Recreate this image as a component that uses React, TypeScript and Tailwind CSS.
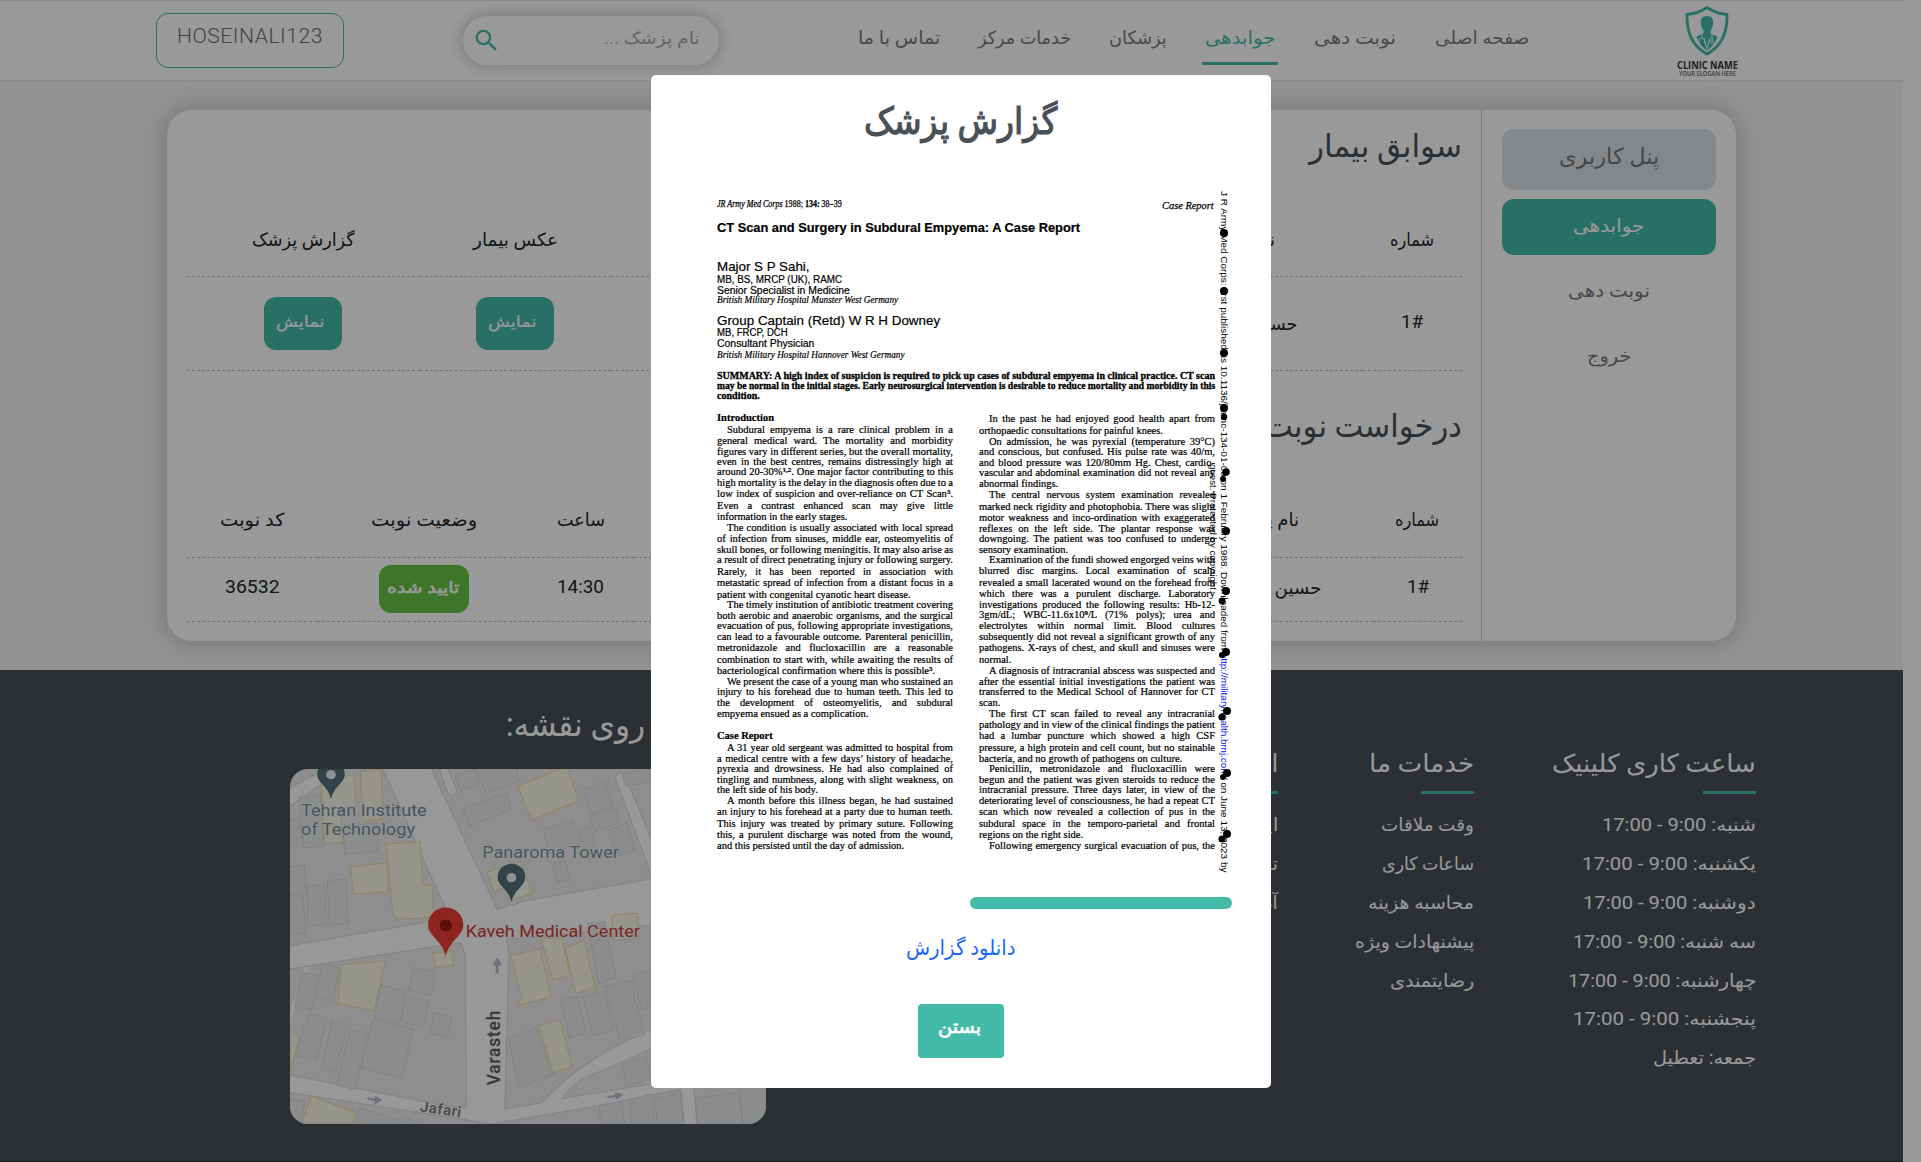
import { useLayoutEffect, useRef, useState } from "react";
import type { ReactNode } from "react";
import { MdSearch } from "react-icons/md";

/* Text scaled horizontally so that it takes exactly `w` pixels. */
function Fit({ w, ltr = false, className = "", children }: { w: number; ltr?: boolean; className?: string; children: ReactNode }) {
  const ref = useRef<HTMLSpanElement>(null);
  const [scale, setScale] = useState(1);
  useLayoutEffect(() => {
    if (ref.current && ref.current.offsetWidth) setScale(w / ref.current.offsetWidth);
  }, [w]);
  return (
    <span dir={ltr ? "ltr" : "rtl"} className={`inline-block shrink-0 leading-none whitespace-nowrap ${className}`} style={{ width: w }}>
      <span ref={ref} className={`inline-block ${ltr ? "origin-left" : "origin-right"}`} style={{ transform: `scaleX(${scale})` }}>
        {children}
      </span>
    </span>
  );
}

/* A justified line: word spacing is adjusted until the line is `w` pixels wide. */
function Justified({ w, children }: { w: number; children: ReactNode }) {
  const ref = useRef<HTMLSpanElement>(null);
  const [gap, setGap] = useState(0);
  useLayoutEffect(() => {
    const el = ref.current;
    if (!el) return;
    const spaces = (el.textContent || "").split(" ").length - 1;
    const natural = el.getBoundingClientRect().width;
    if (spaces > 0) setGap((prev) => prev + (w - natural) / spaces);
  }, [w]);
  return (
    <span ref={ref} className="inline-block whitespace-nowrap" style={{ wordSpacing: `${gap}px` }}>
      {children}
    </span>
  );
}

/* [y, kind, text]; kind: j = justified, i = indented + justified, e = paragraph end, b = bold heading */
type Row = [number, string, ReactNode];

const sup = (t: string) => <sup className="relative -top-[3px] align-baseline text-[7px] leading-none font-bold">{t}</sup>;

const LEFT: Row[] = [
  [419, "b", "Introduction"],
  [431, "i", "Subdural empyema is a rare clinical problem in a"],
  [442, "j", "general medical ward. The mortality and morbidity"],
  [453, "j", "figures vary in different series, but the overall mortality,"],
  [463, "j", "even in the best centres, remains distressingly high at"],
  [473, "j", <>around 20-30%{sup("1,2")}. One major factor contributing to this</>],
  [484, "j", "high mortality is the delay in the diagnosis often due to a"],
  [495, "j", <>low index of suspicion and over-reliance on CT Scan{sup("3")}.</>],
  [507, "j", "Even a contrast enhanced scan may give little"],
  [518, "e", "information in the early stages."],
  [529, "i", "The condition is usually associated with local spread"],
  [540, "j", "of infection from sinuses, middle ear, osteomyelitis of"],
  [551, "j", "skull bones, or following meningitis. It may also arise as"],
  [561, "j", "a result of direct penetrating injury or following surgery."],
  [573, "j", "Rarely, it has been reported in association with"],
  [584, "j", "metastatic spread of infection from a distant focus in a"],
  [596, "e", "patient with congenital cyanotic heart disease."],
  [606, "i", "The timely institution of antibiotic treatment covering"],
  [617, "j", "both aerobic and anaerobic organisms, and the surgical"],
  [627, "j", "evacuation of pus, following appropriate investigations,"],
  [638, "j", "can lead to a favourable outcome. Parenteral penicillin,"],
  [649, "j", "metronidazole and flucloxacillin are a reasonable"],
  [661, "j", "combination to start with, while awaiting the results of"],
  [672, "e", <>bacteriological confirmation where this is possible{sup("3")}.</>],
  [683, "i", "We present the case of a young man who sustained an"],
  [693, "j", "injury to his forehead due to human teeth. This led to"],
  [704, "j", "the development of osteomyelitis, and subdural"],
  [715, "e", "empyema ensued as a complication."],
  [737, "b", "Case Report"],
  [749, "i", "A 31 year old sergeant was admitted to hospital from"],
  [760, "j", "a medical centre with a few days’ history of headache,"],
  [770, "j", "pyrexia and drowsiness. He had also complained of"],
  [781, "j", "tingling and numbness, along with slight weakness, on"],
  [791, "e", "the left side of his body."],
  [802, "i", "A month before this illness began, he had sustained"],
  [813, "j", "an injury to his forehead at a party due to human teeth."],
  [825, "j", "This injury was treated by primary suture. Following"],
  [836, "j", "this, a purulent discharge was noted from the wound,"],
  [847, "e", "and this persisted until the day of admission."],
];

const RIGHT: Row[] = [
  [420, "i", "In the past he had enjoyed good health apart from"],
  [432, "e", "orthopaedic consultations for painful knees."],
  [443, "i", "On admission, he was pyrexial (temperature 39°C)"],
  [453, "j", "and conscious, but confused. His pulse rate was 40/m,"],
  [464, "j", "and blood pressure was 120/80mm Hg. Chest, cardio-"],
  [474, "j", "vascular and abdominal examination did not reveal any"],
  [485, "e", "abnormal findings."],
  [496, "i", "The central nervous system examination revealed"],
  [508, "j", "marked neck rigidity and photophobia. There was slight"],
  [519, "j", "motor weakness and inco-ordination with exaggerated"],
  [530, "j", "reflexes on the left side. The plantar response was"],
  [540, "j", "downgoing. The patient was too confused to undergo"],
  [551, "e", "sensory examination."],
  [561, "i", "Examination of the fundi showed engorged veins with"],
  [572, "j", "blurred disc margins. Local examination of scalp"],
  [584, "j", "revealed a small lacerated wound on the forehead from"],
  [595, "j", "which there was a purulent discharge. Laboratory"],
  [606, "j", "investigations produced the following results: Hb-12-"],
  [616, "j", <>3gm/dL; WBC-11.6x10{sup("9")}/L (71% polys); urea and</>],
  [627, "j", "electrolytes within normal limit. Blood cultures"],
  [638, "j", "subsequently did not reveal a significant growth of any"],
  [649, "j", "pathogens. X-rays of chest, and skull and sinuses were"],
  [661, "e", "normal."],
  [672, "i", "A diagnosis of intracranial abscess was suspected and"],
  [683, "j", "after the essential initial investigations the patient was"],
  [693, "j", "transferred to the Medical School of Hannover for CT"],
  [704, "e", "scan."],
  [715, "i", "The first CT scan failed to reveal any intracranial"],
  [726, "j", "pathology and in view of the clinical findings the patient"],
  [737, "j", "had a lumbar puncture which showed a high CSF"],
  [749, "j", "pressure, a high protein and cell count, but no stainable"],
  [760, "e", "bacteria, and no growth of pathogens on culture."],
  [770, "i", "Penicillin, metronidazole and flucloxacillin were"],
  [781, "j", "begun and the patient was given steroids to reduce the"],
  [791, "j", "intracranial pressure. Three days later, in view of the"],
  [802, "j", "deteriorating level of consciousness, he had a repeat CT"],
  [813, "j", "scan which now revealed a collection of pus in the"],
  [825, "j", "subdural space in the temporo-parietal and frontal"],
  [836, "e", "regions on the right side."],
  [847, "i", "Following emergency surgical evacuation of pus, the"],
];

function Column({ rows, start }: { rows: Row[]; start: number }) {
  return (
    <div className="w-[236px] text-[10.5px] leading-[10px]" style={{ paddingTop: rows[0][0] - start }}>
      {rows.map(([y, kind, text], n) => {
        const height = n + 1 < rows.length ? rows[n + 1][0] - y : 11;
        return (
          <div key={y} className={kind === "i" ? "pl-[10px]" : kind === "b" ? "font-bold" : ""} style={{ height }}>
            {kind === "j" || kind === "i" ? <Justified w={kind === "i" ? 226 : 236}>{text}</Justified> : text}
          </div>
        );
      })}
    </div>
  );
}

const BLOTS = [
  [1224, 233, 4], [1224, 291, 4], [1224, 353, 4], [1224, 408, 4], [1224, 417, 3.2], [1226, 472, 3.8], [1223, 479, 3],
  [1226, 531, 4], [1226, 591, 4], [1222, 601, 3.4], [1226, 652, 4], [1222, 655, 3], [1227, 711, 4], [1222, 717, 3.6],
  [1227, 773, 4], [1223, 777, 3], [1227, 834, 4], [1222, 839, 3.6],
];

function Scan() {
  return (
    <div dir="ltr" className="relative h-[714px] pl-[66px] font-['Liberation_Serif'] text-black">
      <div className="flex h-[14px] w-[497px] justify-between pt-px text-[9.5px] italic [-webkit-text-stroke:0.25px]">
        <Fit ltr w={125}>JR Army Med Corps <span className="not-italic">1988; <b>134:</b> 38–39</span></Fit>
        <Fit ltr w={52} className="text-[11px]">Case Report</Fit>
      </div>
      <div className="flex flex-col items-start pt-px font-['Liberation_Sans'] text-[10px] [-webkit-text-stroke:0.2px]">
        <Fit ltr w={363} className="mt-[8px] h-[38px] text-[12.5px] font-bold">CT Scan and Surgery in Subdural Empyema: A Case Report</Fit>
        <Fit ltr w={93} className="h-[15px] text-[13.5px]">Major S P Sahi,</Fit>
        <Fit ltr w={125} className="h-[11px]">MB, BS, MRCP (UK), RAMC</Fit>
        <Fit ltr w={133} className="h-[10px]">Senior Specialist in Medicine</Fit>
        <Fit ltr w={181} className="h-[18px] font-['Liberation_Serif'] text-[9.5px] italic">British Military Hospital Munster West Germany</Fit>
        <Fit ltr w={223} className="h-[14px] text-[13.5px]">Group Captain (Retd) W R H Downey</Fit>
        <Fit ltr w={71} className="h-[11px]">MB, FRCP, DCH</Fit>
        <Fit ltr w={97} className="h-[12px]">Consultant Physician</Fit>
        <Fit ltr w={188} className="h-[20px] font-['Liberation_Serif'] text-[9.5px] italic">British Military Hospital Hannover West Germany</Fit>
      </div>
      <div className="flex h-[42px] flex-col items-start text-[9.6px] leading-[10px] font-bold [-webkit-text-stroke:0.3px]">
        <Fit ltr w={498} className="h-[10px]">SUMMARY: A high index of suspicion is required to pick up cases of subdural empyema in clinical practice. CT scan</Fit>
        <Fit ltr w={498} className="h-[10px]">may be normal in the initial stages. Early neurosurgical intervention is desirable to reduce mortality and morbidity in this</Fit>
        <Fit ltr w={43} className="h-[10px]">condition.</Fit>
      </div>
      <div className="flex gap-[26px] [-webkit-text-stroke:0.22px]">
        <Column rows={LEFT} start={419} />
        <Column rows={RIGHT} start={419} />
      </div>
      {/* download stamp printed over the right margin */}
      <div className="absolute top-[-8px] left-[578px] origin-top-left rotate-90 font-['Liberation_Sans'] text-[9.5px] leading-none">
        <Fit ltr w={681}>
          J R Army Med Corps: first published as 10.1136/jramc-134-01-09 on 1 February 1988. Downloaded from{" "}
          <span className="text-[#1010ee]">http://militaryhealth.bmj.com/</span> on June 13, 2023 by
        </Fit>
      </div>
      <div className="absolute top-[265px] left-[567px] origin-top-left rotate-90 font-['Liberation_Sans'] text-[9.5px] leading-none">
        <Fit ltr w={129}>guest. Protected by copyright.</Fit>
      </div>
      <svg className="absolute top-[-8px] left-[560px] h-[700px] w-[24px]" viewBox="1211 191 24 700">
        {BLOTS.map(([x, y, r]) => (
          <circle key={`${x}-${y}`} cx={x} cy={y} r={r} />
        ))}
      </svg>
    </div>
  );
}

function Pin({ x, y, s, fill, dot }: { x: number; y: number; s: number; fill: string; dot: string }) {
  return (
    <g transform={`translate(${x} ${y}) scale(${s})`}>
      <path d="M0 0C-3 -18 -12 -30 -26 -46C-36 -58 -40 -64 -40 -76A40 40 0 0 1 40 -76C40 -64 36 -58 26 -46C12 -30 3 -18 0 0Z" fill={fill} />
      <circle cx="0" cy="-74" r="14" fill={dot} />
    </g>
  );
}

const BUILDINGS = [
  "116,418 142,416 154,498 116,500", "142,350 205,345 216,498 156,503", "270,440 370,428 372,514 275,522",
  "116,560 158,556 164,642 116,647", "166,620 216,614 222,733 168,738", "224,602 278,596 285,732 231,735", "116,655 154,650 161,760 116,765",
  "150,878 198,888 178,992 130,980", "210,852 262,864 240,965 190,954", "475,862 538,876 524,947 460,930",
  "380,914 450,935 434,1030 362,1012", "455,952 520,964 503,1040 437,1026", "536,998 586,1010 573,1073 522,1060",
  "356,1018 473,1046 442,1194 323,1164", "172,1003 222,1015 193,1140 135,1126 160,1030", "238,1022 282,1032 248,1178 207,1168", "290,1048 340,1060 306,1228 250,1215",
  "618,388 746,338 758,388 638,438", "594,285 655,267 665,312 610,330", "852,450 936,418 962,488 868,524", "968,330 1030,303 1055,375 990,402", "985,408 1058,384 1075,425 1000,455",
  "955,450 985,440 1010,525 985,540", "1040,450 1095,430 1118,510 1062,530", "876,550 914,540 930,600 892,608", "655,267 776,267 780,305 686,340",
  "980,730 1030,724 1062,890 1012,912", "903,962 950,948 976,1060 926,1074", "966,950 1028,934 1054,1050 996,1066", "1030,918 1104,900 1144,1065 1074,1082", "1110,885 1164,872 1164,980 1136,988",
  "750,1075 832,1044 878,1186 780,1222", "1082,1150 1150,1130 1164,1195 1090,1218", "116,1256 160,1265 145,1332 116,1332", "318,1284 436,1322 434,1332 305,1332", "446,1314 500,1328 500,1332 446,1332",
  "1080,280 1164,267 1164,306 1090,318",
];

/* blocks south of the lower road */
const SOUTH = [
  "1014,1275 1078,1265 1088,1332 1018,1332", "1104,1258 1168,1242 1174,1332 1106,1332", "1176,1254 1250,1240 1258,1332 1182,1332",
  "1292,1254 1420,1238 1430,1332 1300,1332", "1420,1225 1498,1215 1498,1332 1432,1332",
];

const SHOPS = [
  "205,292 302,286 306,380 262,385 270,486 216,490", "320,272 382,268 384,418 326,422", "396,492 494,486 502,616 528,616 534,712 424,718 414,700", "292,560 396,548 402,635 300,642",
  "776,318 920,260 954,362 818,420", "688,576 785,544 819,640 760,662 745,620 708,636", "530,820 585,812 590,856 540,862",
  "266,854 392,843 360,992 255,970", "757,826 842,806 874,952 780,976 776,962 790,958", "845,775 905,775 930,886 880,900", "915,805 970,780 1002,924 946,940", "838,1036 900,1020 935,1162 880,1178", "116,1060 144,1066 116,1180", "178,1248 306,1298 295,1332 150,1332",
];

function Map() {
  return (
    <svg direction="ltr" className="block h-[355px] w-[476px] rounded-[18px]" viewBox="116 267 1382 1065" preserveAspectRatio="none">
      <rect x="116" y="267" width="1382" height="1065" fill="#ededed" />
      <g fill="#fdfdfd" stroke="#d6d7da" strokeWidth="3">
        <path d="M110 328L214 267H270L110 384Z" />
        <path d="M545 250L570 330Q580 352 598 342Q604 336 592 310L570 250Z" />
        <path d="M1062 300Q1060 280 1076 280Q1086 280 1094 300L1190 540L1175 610Z" />
        <path d="M384 262L565 680C570 710 540 722 500 728L100 800V870L170 858L612 788L625 828L628 1284L560 1276L100 1182V1236L620 1318L700 1332L1010 1278L1250 1228L1262 1340H1298L1288 1222L1510 1180V1120L1150 1214L905 1256Q940 1210 980 1190L1164 1108L1400 1000L1400 940L1164 1048C1060 1096 940 1160 846 1268L740 1286L752 826L746 778L1520 700V530L1164 597L800 662L718 688L524 262Z" />
      </g>
      <path d="M110 1030L165 862" stroke="#fdfdfd" strokeWidth="10" />
      <g stroke="#d3d4d8" strokeWidth="2.5" fill="#e8ecec">
        {BUILDINGS.map((p) => <polygon key={p} points={p} />)}
        {SOUTH.map((p) => <polygon key={p} points={p} />)}
      </g>
      <g stroke="#f1dba4" strokeWidth="3" fill="#fbf8ea">
        {SHOPS.map((p) => <polygon key={p} points={p} />)}
        <polygon points="1050,706 1124,700 1128,776 1056,780" />
      </g>
      <g fill="#b9bbcf">
        <path d="M718 832L732 856H722V881H713V856H704Z" />
        <path d="M384 1260L362 1274V1264L340 1258V1252L362 1256V1247Z" />
        <path d="M1084 1244L1062 1260V1252L1038 1255V1248L1060 1244V1236Z" />
      </g>
      <Pin x={235} y={358} s={1} fill="#54707c" dot="#eef1f2" />
      <Pin x={759} y={667} s={1} fill="#54707c" dot="#eef1f2" />
      <Pin x={568} y={831} s={1.28} fill="#ea3f35" dot="#a01410" />
      <g fontFamily="Roboto" stroke="#f4f4f4" strokeWidth="5" paintOrder="stroke" textAnchor="start">
        <g fill="#7a8f99" fontSize="50">
          <text x="148" y="407" textLength="365" lengthAdjust="spacingAndGlyphs">Tehran Institute</text>
          <text x="148" y="465" textLength="331" lengthAdjust="spacingAndGlyphs">of Technology</text>
          <text x="674" y="535" textLength="397" lengthAdjust="spacingAndGlyphs">Panaroma Tower</text>
        </g>
        <text x="626" y="771" fontSize="51" fill="#cf3d3d" textLength="506" lengthAdjust="spacingAndGlyphs">Kaveh Medical Center</text>
        <text transform="translate(727 1216) rotate(-90)" fontSize="52" fill="#5a5b5e" fontWeight="500" textLength="224">Varasteh</text>
        <text transform="translate(492 1294) rotate(8)" fontSize="44" fill="#7b7b7d" fontWeight="500" textLength="120">Jafari</text>
      </g>
    </svg>
  );
}

function Logo() {
  return (
    <div dir="ltr" className="flex w-[62px] flex-col items-center pt-[4px]">
      <svg className="h-[52px] w-[46px]" viewBox="0 0 46 52">
        <path d="M23 2.5C17 6.5 10 9 3 9.500C2.500 26 8 41 23 49C38 41 43.500 26 43 9.500C36 9 29 6.500 23 2.500Z" fill="none" stroke="#44bba8" strokeWidth="2.8" />
        <path d="M23 11C18 11 16.500 14 16.800 18C17 21.500 18.500 24 19.500 25.500V28.500L12.500 31.500C14 37 18 42.500 23 45.500C28 42.500 32 37 33.500 31.500L26.500 28.500V25.500C27.500 24 29 21.500 29.200 18C29.500 14 28 11 23 11Z" fill="#44bba8" />
        <path d="M18 29.500V33M15 38V35.500Q15 33 17.800 33Q20.500 33 20.500 35.500V38M28 29V35M23 44L20 33M23 44L26 33" fill="none" stroke="#fff" strokeWidth="0.9" />
        <circle cx="28" cy="36.500" r="1.500" fill="none" stroke="#fff" strokeWidth="0.9" />
      </svg>
      <Fit ltr w={61} className="mt-[3px] font-['Open_Sans'] text-[10px] font-bold text-[#333]">CLINIC NAME</Fit>
      <Fit ltr w={57} className="mt-px font-['Open_Sans'] text-[6.5px] font-semibold text-[#666]">YOUR SLOGAN HERE</Fit>
    </div>
  );
}

const NAV: { label: string; w: number; box: string; on?: boolean }[] = [
  { label: "صفحه اصلی", w: 94, box: "w-[94px]" },
  { label: "نوبت دهی", w: 82, box: "ml-[36px] mr-[39px] w-[82px]" },
  { label: "جوابدهی", w: 70, box: "w-[76px]", on: true },
  { label: "پزشکان", w: 58, box: "mr-[35px] w-[58px]" },
  { label: "خدمات مرکز", w: 93, box: "mr-[38px] w-[93px]" },
  { label: "تماس با ما", w: 82, box: "mr-[38px] w-[82px]" },
];

function Header() {
  return (
    <header className="flex h-[81px] border-t border-b border-[#e7e7e7] bg-white pr-[165px]">
      <Logo />
      <nav className="mr-[147px] flex pt-[1px]">
        {NAV.map((n) => (
          <div key={n.label} className={`flex h-[63px] flex-col items-center pt-[27px] text-[18px] ${n.box} ${n.on ? "border-b-[3px] border-[#44bba8] text-[#44bba8]" : "text-[#7a7a7a]"}`}>
            <Fit w={n.w}>{n.label}</Fit>
          </div>
        ))}
      </nav>
      <div className="mt-[15px] mr-[139px] flex h-[49px] w-[256px] items-start justify-between rounded-full bg-white pr-[19px] pl-[9px] shadow-[0_0_14px_2px_rgba(0,0,0,0.2)]">
        <Fit w={96} className="pt-[14px] text-[17px] text-[#a3a8ad]">نام پزشک ...</Fit>
        <MdSearch className="mt-[10px] h-[29px] w-[29px] text-[#44bba8]" />
      </div>
      <div className="mt-[12px] mr-[119px] flex h-[55px] w-[188px] items-start rounded-[12px] border border-[#44bba8] pt-[12px] pr-[20px] text-[21px] text-[#6e6e6e]">
        <Fit ltr w={146} className="font-light tracking-[0.5px]">HOSEINALI123</Fit>
      </div>
    </header>
  );
}

const cell = "flex items-center justify-center border-b border-dashed border-[#bdbdbd]";

function ShowButton() {
  return (
    <button className="mr-px flex h-[53px] w-[78px] justify-center rounded-[12px] bg-[#44bba8] pt-[17px] text-[16px] text-white [-webkit-text-stroke:0.2px]">
      <Fit w={48}>نمایش</Fit>
    </button>
  );
}

function Card() {
  return (
    <section className="mx-auto flex h-[531px] w-[1569px] rounded-[25px] bg-white shadow-[0_0_22px_4px_rgba(0,0,0,0.16)]">
      <aside className="flex w-[255px] flex-col items-center border-l border-[#c8c8c8] pt-[19px] text-[18px] text-[#777]">
        <div className="flex h-[61px] w-[214px] justify-center rounded-[12px] bg-[#dde3e7] pt-[17px] text-[22px]"><Fit w={100}>پنل کاربری</Fit></div>
        <div className="mt-[9px] flex h-[56px] w-[214px] justify-center rounded-[12px] bg-[#44bba8] pt-[18px] text-white"><Fit w={71}>جوابدهی</Fit></div>
        <div className="pt-[22px]"><Fit w={82}>نوبت دهی</Fit></div>
        <div className="pt-[38px]"><Fit w={44}>خروج</Fit></div>
      </aside>
      <div className="mr-[19px] w-[1275px] text-[18px] text-[#212529]">
        <h2 className="h-[94px] pt-[12px] text-[32px] text-[#495057]"><Fit w={153}>سوابق بیمار</Fit></h2>
        <div className="grid grid-cols-[99px_752px_191px_233px]">
          <div className={`${cell} h-[73px]`}><Fit w={44}>شماره</Fit></div>
          <div className={`${cell} justify-start pr-[88px]`}><Fit w={72}>نام پزشک</Fit></div>
          <div className={cell}><Fit w={85}>عکس بیمار</Fit></div>
          <div className={cell}><Fit w={103}>گزارش پزشک</Fit></div>
          <div className={`${cell} h-[94px] pr-[2px] pb-[4px]`}><Fit w={22} ltr>1#</Fit></div>
          <div className={`${cell} justify-start pr-[66px]`}><Fit w={82}>حسین علی</Fit></div>
          <div className={cell}><ShowButton /></div>
          <div className={cell}><ShowButton /></div>
        </div>
        <h2 className="h-[114px] pt-[31px] text-[32px] text-[#495057]"><Fit w={198}>درخواست نوبت</Fit></h2>
        <div className="grid grid-cols-[89px_739px_107px_210px_130px]">
          <div className={`${cell} h-[73px] pb-[2px]`}><Fit w={44}>شماره</Fit></div>
          <div className={`${cell} justify-start pr-[74px] pb-[2px]`}><Fit w={72}>نام پزشک</Fit></div>
          <div className={`${cell} pb-[2px]`}><Fit w={48}>ساعت</Fit></div>
          <div className={`${cell} pb-[2px] pl-[5px]`}><Fit w={106}>وضعیت نوبت</Fit></div>
          <div className={`${cell} pb-[2px]`}><Fit w={64}>کد نوبت</Fit></div>
          <div className={`${cell} h-[64px] pb-[6px]`}><Fit w={22} ltr>1#</Fit></div>
          <div className={`${cell} justify-start pr-[52px] pb-[4px]`}><Fit w={84}>حسین علی</Fit></div>
          <div className={`${cell} pb-[6px]`}><Fit w={47} ltr>14:30</Fit></div>
          <div className={`${cell} pb-[2px] pl-[3px]`}>
            <span className="flex h-[48px] w-[90px] justify-center rounded-[12px] bg-[#67c543] pt-[15px] text-[16px] text-white [-webkit-text-stroke:0.6px]"><Fit w={72}>تایید شده</Fit></span>
          </div>
          <div className={`${cell} pb-[6px]`}><Fit w={55} ltr>36532</Fit></div>
        </div>
      </div>
    </section>
  );
}

type Item = [string, number];

function Links({ title, items, className }: { title: Item; items: Item[]; className: string }) {
  return (
    <div className={`flex flex-col items-start ${className}`}>
      <h3 className="h-[46px] text-[25px]"><Fit w={title[1]}>{title[0]}</Fit></h3>
      <div className="mb-[12px] h-[3px] w-[53px] bg-[#44bba8]" />
      {items.map(([t, w]) => (
        <div key={t} className="flex h-[38.8px] items-center text-[18px]"><Fit w={w}>{t}</Fit></div>
      ))}
    </div>
  );
}

function Footer() {
  return (
    <footer className="flex h-[492px] border-b border-[#33383d] bg-[#4a4f57] pr-[147px] text-white">
      <Links className="mt-[75px] w-[204px]" title={["ساعت کاری کلینیک", 204]} items={[
        ["شنبه: 9:00 - 17:00", 154], ["یکشنبه: 9:00 - 17:00", 174], ["دوشنبه: 9:00 - 17:00", 173], ["سه شنبه: 9:00 - 17:00", 183],
        ["چهارشنبه: 9:00 - 17:00", 188], ["پنجشنبه: 9:00 - 17:00", 183], ["جمعه: تعطیل", 103],
      ]} />
      <Links className="mt-[75px] mr-[78px] w-[119px]" title={["خدمات ما", 105]} items={[
        ["وقت ملاقات", 93], ["ساعات کاری", 92], ["محاسبه هزینه", 106], ["پیشنهادات ویژه", 119], ["رضایتمندی", 84],
      ]} />
      <Links className="mt-[75px] mr-[77px] w-[120px]" title={["ارتباط با ما", 110]} items={[["ایمیل", 45], ["تماس", 45], ["آدرس", 45]]} />
      <div className="mr-[392px] flex w-[476px] flex-col items-center">
        <h3 className="h-[99px] w-full pt-[30px] pr-[10px] text-[33px]">
          <Fit w={250}>موقعیت روی نقشه:</Fit>
        </h3>
        <Map />
      </div>
    </footer>
  );
}

export default function App() {
  return (
    <div dir="rtl" className="relative h-[1162px] w-[1921px] overflow-hidden bg-white font-['Roboto','DejaVu_Sans',sans-serif]">
      <div className="mr-[18px] w-[1903px]">
        <Header />
        <main className="bg-[#f3f3f3] py-[29px]">
          <Card />
        </main>
        <Footer />
      </div>
      <div className="absolute inset-0 bg-black/40 pt-[75px] pr-[650px]">
        <div role="dialog" className="flex h-[1013px] w-[620px] flex-col rounded-[5px] bg-white">
          <h2 className="flex h-[124px] shrink-0 justify-center pt-[28px] text-[37px] text-[#495057] [-webkit-text-stroke:1.2px]"><Fit w={193}>گزارش پزشک</Fit></h2>
          <Scan />
          <div className="mr-[39px] -mt-[16px] h-[12px] w-[262px] shrink-0 rounded-full bg-[#44bba8]" />
          <a className="flex h-[95px] shrink-0 justify-center pt-[29px] text-[21px] text-[#1a66ff]"><Fit w={110}>دانلود گزارش</Fit></a>
          <button className="mx-auto flex h-[54px] w-[86px] shrink-0 justify-center rounded-[4px] bg-[#44bba8] pt-[14px] text-[18px] text-white [-webkit-text-stroke:0.7px]"><Fit w={43}>بستن</Fit></button>
        </div>
      </div>
    </div>
  );
}
